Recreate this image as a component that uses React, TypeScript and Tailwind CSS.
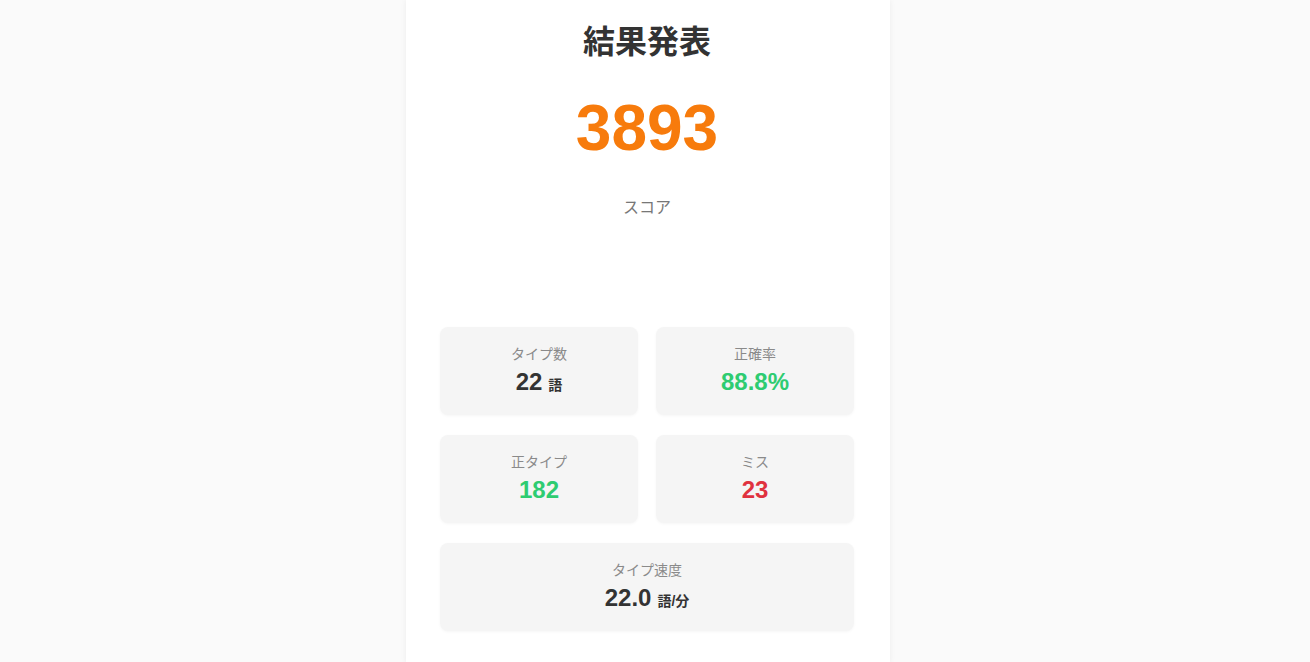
import React from 'react';

type Stat = {
  label: string;
  value: string;
  unit?: string;
  color: string;
  wide?: boolean;
};

const stats: Stat[] = [
  { label: 'タイプ数', value: '22', unit: '語', color: 'text-[#333333]' },
  { label: '正確率', value: '88.8%', color: 'text-[#2ecc71]' },
  { label: '正タイプ', value: '182', color: 'text-[#2ecc71]' },
  { label: 'ミス', value: '23', color: 'text-[#e0323f]' },
  { label: 'タイプ速度', value: '22.0', unit: '語/分', color: 'text-[#333333]', wide: true },
];

function StatBox({ stat }: { stat: Stat }) {
  return (
    <div
      className={`flex flex-col items-center rounded-lg bg-[#f5f5f5] py-[17px] shadow-[0_1px_3px_rgba(0,0,0,0.04)] ${
        stat.wide ? 'col-span-2' : ''
      }`}
    >
      <span className="text-sm leading-5 text-[#8a8a8a]">{stat.label}</span>
      <span className={`mt-0.5 text-2xl leading-8 font-bold ${stat.color}`}>
        {stat.value}
        {stat.unit && <span className="ml-1.5 text-sm font-semibold">{stat.unit}</span>}
      </span>
    </div>
  );
}

export default function App() {
  return (
    <div
      className="flex min-h-screen justify-center bg-[#fafafa] pr-[14px]"
      style={{ fontFamily: '"Liberation Sans", "Noto Sans CJK JP", sans-serif' }}
    >
      <div className="flex w-[484px] flex-col items-center bg-white pt-[22px] pr-[36px] pb-8 pl-[34px] shadow-[0_0_6px_rgba(0,0,0,0.06)]">
        <h1 className="text-[32px] leading-10 font-semibold text-[#333333]">結果発表</h1>

        <div className="mt-[34px] text-[64px] leading-none font-bold text-[#f77b0c]">3893</div>

        <div className="mt-9 text-base leading-6 text-[#777777]">スコア</div>

        <div className="mt-[107px] grid w-full grid-cols-2 gap-x-[18px] gap-y-5">
          {stats.map((s) => (
            <StatBox key={s.label} stat={s} />
          ))}
        </div>
      </div>
    </div>
  );
}
